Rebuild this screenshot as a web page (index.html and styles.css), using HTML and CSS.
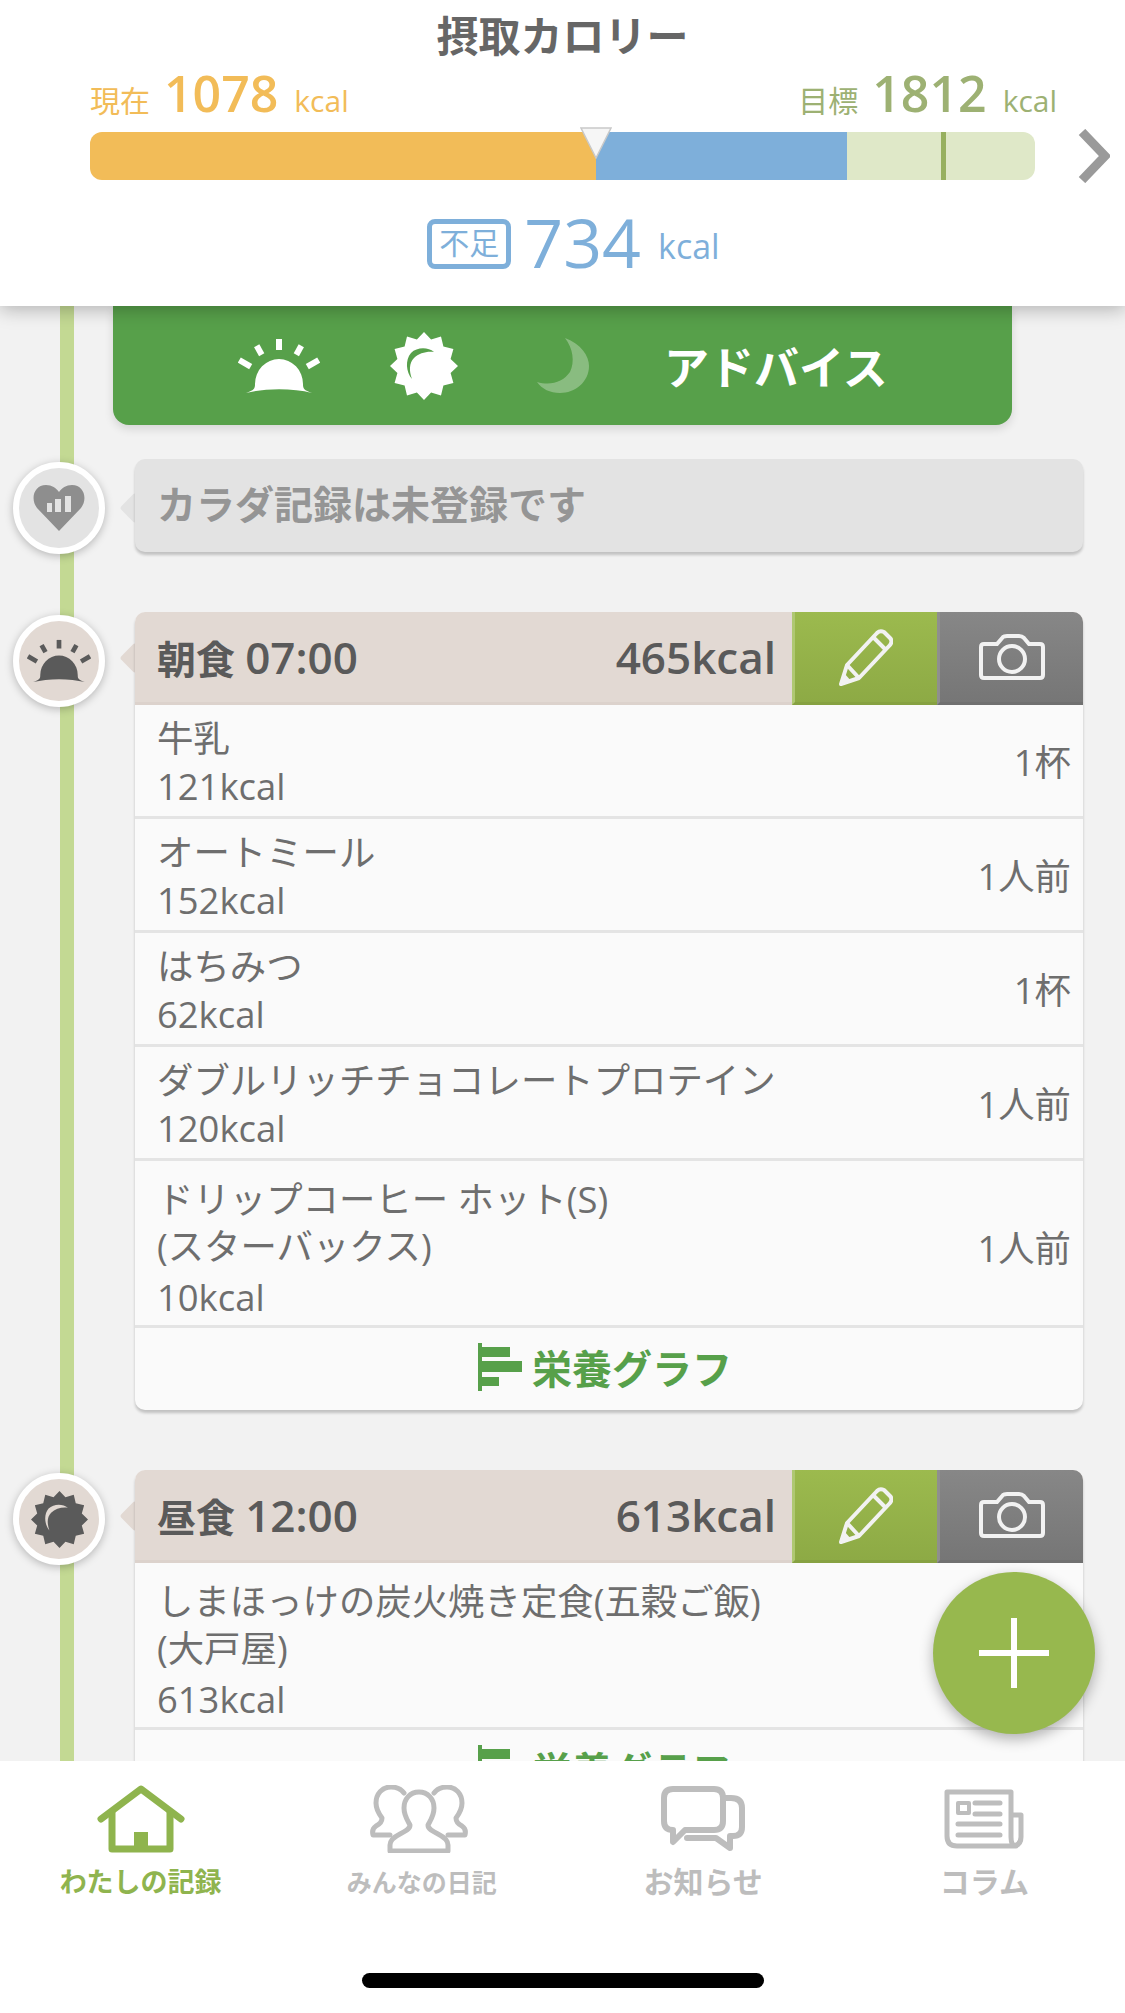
FILE: index.html
```html
<!DOCTYPE html>
<html lang="ja">
<head>
    <meta charset="UTF-8">
    <meta name="viewport" content="width=device-width, initial-scale=1.0">
    <title>わたしの記録</title>
    <link rel="stylesheet" href="styles.css">
</head>
<body>
    <svg class="defs" aria-hidden="true">
        <symbol id="i-sunrise" viewBox="0 0 82 56">
            <path d="M8 55 C16 52 17 51 17 46 A24 25 0 0 1 65 46 C65 51 66 52 74 55 C55 50 27 50 8 55Z" fill="currentColor"/>
            <g stroke="currentColor" stroke-width="6">
                <line x1="41" y1="1" x2="41" y2="12"/>
                <line x1="18.7" y1="7.7" x2="23.7" y2="16.7"/>
                <line x1="63.3" y1="7.7" x2="58.3" y2="16.7"/>
                <line x1="1.3" y1="22" x2="12.7" y2="28.7"/>
                <line x1="80.7" y1="22" x2="69.3" y2="28.7"/>
            </g>
        </symbol>
        <symbol id="i-noon" viewBox="0 0 68 68">
            <polygon fill="currentColor" points="34,0 41.1,7.4 51,4.6 53.4,14.6 63.4,17 60.6,26.9 68,34 60.6,41.1 63.4,51 53.4,53.4 51,63.4 41.1,60.6 34,68 26.9,60.6 17,63.4 14.6,53.4 4.6,51 7.4,41.1 0,34 7.4,26.9 4.6,17 14.6,14.6 17,4.6 26.9,7.4"/>
            <path d="M44 20 C38 15 27 15 21 21 C15 28 16 40 22 47 C19 39 19 31 24 26 C29 21 37 19 44 20Z" style="fill: var(--cut)"/>
        </symbol>
        <symbol id="i-pencil" viewBox="0 0 54 57">
            <g fill="none" stroke="currentColor" stroke-width="4" stroke-linejoin="round">
                <path d="M2 55 L8 36 L38 4 Q41 1 45 3 L51 9 Q54 12 51 16 L20 49Z"/>
                <path d="M34 8 L47 21 M8 36 L20 49"/>
            </g>
            <path d="M2 55 L5 44 L13 53Z" fill="currentColor"/>
        </symbol>
        <symbol id="i-camera" viewBox="0 0 66 46">
            <path d="M5 10 H18 L24 3 Q25 2 28 2 H40 Q43 2 45 4 L50 10 H61 Q64 10 64 13 V41 Q64 44 61 44 H5 Q2 44 2 41 V13 Q2 10 5 10Z" fill="none" stroke="currentColor" stroke-width="4"/>
            <circle cx="33" cy="25" r="13" fill="none" stroke="currentColor" stroke-width="4"/>
        </symbol>
        <symbol id="i-graph" viewBox="0 0 44 48">
            <path d="M0 0 H4 V4 H32 V14 H4 V18 H44 V29 H4 V34 H21 V43 H4 V48 H0Z" fill="currentColor"/>
        </symbol>
    </svg>

    <div class="page">
        <header class="summary">
            <h1 class="summary-title">摂取カロリー</h1>
            <div class="summary-values">
                <div class="value value-now">
                    <span class="value-label">現在</span>
                    <span class="value-num">1078</span>
                    <span class="value-unit">kcal</span>
                </div>
                <div class="value value-goal">
                    <span class="value-label">目標</span>
                    <span class="value-num">1812</span>
                    <span class="value-unit">kcal</span>
                </div>
            </div>
            <div class="gauge-row">
                <div class="gauge">
                    <div class="gauge-track">
                        <div class="gauge-now"></div>
                        <div class="gauge-lack"></div>
                        <div class="gauge-rest"></div>
                    </div>
                    <div class="gauge-goal"></div>
                    <svg class="gauge-pin" viewBox="0 0 32 32" aria-hidden="true">
                        <polygon points="1,1 31,1 16,31" fill="#f6f6f6" stroke="#c9c9c9" stroke-width="1.5"/>
                    </svg>
                </div>
                <svg class="gauge-next" viewBox="0 0 32 54" aria-hidden="true">
                    <polyline points="4,3 27,27 4,51" fill="none" stroke="#9a9a9a" stroke-width="9"/>
                </svg>
            </div>
            <div class="deficit">
                <span class="deficit-tag">不足</span>
                <span class="deficit-num">734</span>
                <span class="deficit-unit">kcal</span>
            </div>
        </header>

        <main class="timeline">
            <div class="timeline-line"></div>

            <section class="advice">
                <svg class="advice-sunrise"><use href="#i-sunrise"/></svg>
                <svg class="advice-noon"><use href="#i-noon"/></svg>
                <svg class="advice-moon" viewBox="0 0 52 56" aria-hidden="true">
                    <path d="M28 0 C44 6 52 18 52 28 C52 44 38 55 23 55 C13 55 5 51 0 44 C14 48 26 44 33 34 C38 24 36 10 28 0Z"/>
                </svg>
                <span class="advice-text">アドバイス</span>
            </section>

            <section class="entry entry-body">
                <div class="dot dot-body">
                    <svg class="dot-heart" viewBox="0 0 52 46" aria-hidden="true">
                        <path d="M26 46 L4 23 C-3 14 1 0 13 0 C19 0 23 3 26 7 C29 3 33 0 39 0 C51 0 55 14 48 23Z" fill="#8e8e8e"/>
                        <path d="M14 18 H19 V27 H14Z M22 14 H28 V27 H22Z M32 11 H38 V27 H32Z" fill="#e3e3e3"/>
                    </svg>
                </div>
                <div class="body-card">カラダ記録は未登録です</div>
            </section>

            <section class="entry">
                <div class="dot">
                    <svg class="dot-sunrise"><use href="#i-sunrise"/></svg>
                </div>
                <div class="meal">
                    <div class="meal-head">
                        <span class="meal-title">朝食 <span class="meal-num">07:00</span></span>
                        <span class="meal-kcal meal-num">465kcal</span>
                        <div class="meal-btn meal-btn-edit"><svg class="icon-pencil"><use href="#i-pencil"/></svg></div>
                        <div class="meal-btn meal-btn-photo"><svg class="icon-camera"><use href="#i-camera"/></svg></div>
                    </div>
                    <div class="item">
                        <div>牛乳<br>121kcal</div>
                        <div>1杯</div>
                    </div>
                    <div class="item">
                        <div>オートミール<br>152kcal</div>
                        <div>1人前</div>
                    </div>
                    <div class="item">
                        <div>はちみつ<br>62kcal</div>
                        <div>1杯</div>
                    </div>
                    <div class="item">
                        <div>ダブルリッチチョコレートプロテイン<br>120kcal</div>
                        <div>1人前</div>
                    </div>
                    <div class="item item-tall">
                        <div>ドリップコーヒー ホット(S)<br>(スターバックス)<span class="item-kcal">10kcal</span></div>
                        <div>1人前</div>
                    </div>
                    <div class="graph-link">
                        <svg class="icon-graph"><use href="#i-graph"/></svg>
                        <span>栄養グラフ</span>
                    </div>
                </div>
            </section>

            <section class="entry">
                <div class="dot">
                    <svg class="dot-noon"><use href="#i-noon"/></svg>
                </div>
                <div class="meal">
                    <div class="meal-head">
                        <span class="meal-title">昼食 <span class="meal-num">12:00</span></span>
                        <span class="meal-kcal meal-num">613kcal</span>
                        <div class="meal-btn meal-btn-edit"><svg class="icon-pencil"><use href="#i-pencil"/></svg></div>
                        <div class="meal-btn meal-btn-photo"><svg class="icon-camera"><use href="#i-camera"/></svg></div>
                    </div>
                    <div class="item item-tall">
                        <div>しまほっけの炭火焼き定食(五穀ご飯)<br>(大戸屋)<span class="item-kcal">613kcal</span></div>
                    </div>
                    <div class="graph-link">
                        <svg class="icon-graph"><use href="#i-graph"/></svg>
                        <span>栄養グラフ</span>
                    </div>
                </div>
            </section>
        </main>

        <div class="fab"></div>

        <nav class="tabbar">
            <div class="tabs">
                <div class="tab tab-active">
                    <svg class="tab-icon tab-icon-home" viewBox="0 0 88 68" aria-hidden="true">
                        <g fill="none" stroke="currentColor" stroke-width="7" stroke-linecap="round" stroke-linejoin="round">
                            <path d="M4 34 L44 4 L84 34"/>
                            <path d="M15 27 V64 H73 V27"/>
                        </g>
                        <rect x="37" y="47" width="14" height="18" fill="currentColor"/>
                    </svg>
                    <span class="tab-label tab-label-active">わたしの記録</span>
                </div>
                <div class="tab">
                    <svg class="tab-icon tab-icon-people" viewBox="0 0 98 68" aria-hidden="true">
                        <g fill="none" stroke="currentColor" stroke-width="5" stroke-linejoin="round" stroke-linecap="round">
                            <path d="M49 7 C58 7 64 14 64 23 C64 31 60 36 58 40 C58 44 62 46 68 49 C74 52 78 56 78 60 V66 H20 V60 C20 56 24 52 30 49 C36 46 40 44 40 40 C38 36 34 31 34 23 C34 14 40 7 49 7Z"/>
                            <path d="M34 8 C31 4 26 2 21 2 C12 2 6 9 6 18 C6 25 9 29 12 33 C12 37 10 39 6 41 C3 43 2 46 3 50 H20"/>
                            <path d="M64 8 C67 4 72 2 77 2 C86 2 92 9 92 18 C92 25 89 29 86 33 C86 37 88 39 92 41 C95 43 96 46 95 50 H78"/>
                        </g>
                    </svg>
                    <span class="tab-label tab-label-narrow">みんなの日記</span>
                </div>
                <div class="tab">
                    <svg class="tab-icon tab-icon-chat" viewBox="0 0 84 66" aria-hidden="true">
                        <g fill="none" stroke="currentColor" stroke-width="6" stroke-linejoin="round" stroke-linecap="round">
                            <path d="M12 3 H53 Q62 3 62 12 V35 Q62 44 53 44 H24 L12 56 V44 Q3 44 3 35 V12 Q3 3 12 3Z"/>
                            <path d="M62 12 H70 Q81 12 81 22 V41 Q81 50 72 50 H69 V62 L55 52 H26"/>
                        </g>
                    </svg>
                    <span class="tab-label">お知らせ</span>
                </div>
                <div class="tab">
                    <svg class="tab-icon tab-icon-news" viewBox="0 0 80 60" aria-hidden="true">
                        <g fill="none" stroke="currentColor" stroke-linejoin="round">
                            <path stroke-width="5" d="M3 3 H67 V48 Q67 57 72 57 H13 Q3 57 3 47Z M67 26 H77 V48 Q77 57 68 57"/>
                            <rect x="14" y="14" width="11" height="10" stroke-width="4"/>
                            <path stroke-width="5" stroke-linecap="round" d="M31 14 H56 M31 25 H56 M14 35 H56 M14 46 H56"/>
                        </g>
                    </svg>
                    <span class="tab-label">コラム</span>
                </div>
            </div>
            <div class="home-bar"></div>
        </nav>
    </div>
</body>
</html>
```

FILE: styles.css
```css
:root {
    --orange: #f2bc58;
    --blue: #7eafda;
    --green: #57a04a;
    --leaf: #97b84e;
    --olive: #9db173;
    --beige: #e2d9d3;
    --text: #6e6e6e;
    --text-dark: #5a5a5a;
    --tab-gray: #bdbdbd;
}

* {
    box-sizing: border-box;
    margin: 0;
    padding: 0;
}

body {
    font-family: "Open Sans", "Noto Sans CJK JP", sans-serif;
    color: var(--text);
    background: #fff;
}

.defs {
    display: none;
}

.page {
    position: relative;
    width: 1125px;
    height: 2013px;
    display: flex;
    flex-direction: column;
    overflow: hidden;
}

/* Header */
.summary {
    position: relative;
    z-index: 3;
    height: 306px;
    flex-shrink: 0;
    background: #fff;
    box-shadow: 0 3px 18px rgba(0, 0, 0, 0.28);
}

.summary-title {
    padding-top: 8px;
    font-size: 42px;
    line-height: 56px;
    font-weight: 700;
    text-align: center;
    color: #666;
}

.summary-values {
    display: flex;
    justify-content: space-between;
    height: 65px;
    padding: 0 68px 0 90px;
}

.value {
    display: flex;
    align-items: baseline;
    line-height: 58px;
}

.value-now {
    color: var(--orange);
}

.value-goal {
    color: var(--olive);
}

.value-label {
    font-size: 30px;
}

.value-num {
    margin: 0 16px 0 14px;
    font-size: 50px;
    font-weight: 600;
}

.value-unit {
    font-size: 30px;
}

.gauge-row {
    display: flex;
    align-items: center;
    gap: 43px;
    padding-left: 90px;
}

.gauge {
    position: relative;
    width: 945px;
    height: 48px;
}

.gauge-track {
    display: flex;
    height: 100%;
    border-radius: 12px;
    overflow: hidden;
}

.gauge-now {
    width: 506px;
    background: var(--orange);
}

.gauge-lack {
    width: 251px;
    background: var(--blue);
}

.gauge-rest {
    flex: 1;
    background: #dfe8c8;
}

.gauge-goal {
    position: absolute;
    top: 0;
    left: 851px;
    width: 5px;
    height: 100%;
    background: #97b05f;
}

.gauge-pin {
    position: absolute;
    top: -5px;
    left: 490px;
    width: 32px;
    height: 32px;
}

.gauge-next {
    width: 32px;
    height: 54px;
}

.deficit {
    display: flex;
    align-items: center;
    justify-content: center;
    gap: 13px;
    margin-top: 32px;
    padding-left: 22px;
    color: var(--blue);
}

.deficit-tag {
    width: 84px;
    height: 50px;
    border: 5px solid var(--blue);
    border-radius: 8px;
    font-size: 30px;
    line-height: 38px;
    text-align: center;
}

.deficit-num {
    margin-bottom: 4px;
    font-size: 68px;
    line-height: 54px;
}

.deficit-unit {
    margin-top: 4px;
    margin-left: 4px;
    font-size: 34px;
    line-height: 40px;
}

/* Timeline */
.timeline {
    position: relative;
    flex: 1;
    min-height: 0;
    overflow: hidden;
    background: #f2f2f2;
}

.timeline-line {
    position: absolute;
    top: 0;
    bottom: 0;
    left: 60px;
    width: 14px;
    background: #c3d993;
}

.advice {
    position: relative;
    display: flex;
    align-items: center;
    width: 899px;
    height: 119px;
    margin: 0 0 34px 113px;
    padding-left: 125px;
    border-radius: 0 0 16px 16px;
    background: var(--green);
    box-shadow: 0 4px 10px rgba(0, 0, 0, 0.12);
    color: #fff;
    --cut: var(--green);
}

.advice-sunrise {
    width: 82px;
    height: 56px;
}

.advice-noon {
    width: 68px;
    height: 68px;
    margin-left: 70px;
}

.advice-moon {
    width: 52px;
    height: 56px;
    margin-left: 79px;
    fill: rgba(255, 255, 255, 0.3);
}

.advice-text {
    margin-left: 75px;
    font-size: 45px;
    font-weight: 700;
}

.entry {
    position: relative;
    width: 948px;
    margin: 0 0 60px 135px;
}

.entry::before {
    content: "";
    position: absolute;
    top: 35px;
    left: -11px;
    width: 22px;
    height: 22px;
    border-radius: 3px;
    background: var(--beige);
    transform: rotate(45deg);
}

.entry-body::before {
    top: 38px;
    background: #e3e3e3;
}

.dot {
    position: absolute;
    top: 3px;
    left: -122px;
    z-index: 1;
    display: flex;
    align-items: center;
    justify-content: center;
    width: 92px;
    height: 92px;
    border: 6px solid #fff;
    border-radius: 50%;
    background: var(--beige);
    box-shadow: 0 2px 8px rgba(0, 0, 0, 0.25);
    color: var(--text-dark);
    --cut: var(--beige);
}

.dot-body {
    background: #e3e3e3;
}

.dot-heart {
    width: 52px;
    height: 46px;
}

.dot-sunrise {
    width: 64px;
    height: 44px;
}

.dot-noon {
    width: 57px;
    height: 57px;
}

.body-card {
    position: relative;
    height: 93px;
    padding-left: 22px;
    border-radius: 10px;
    background: #e3e3e3;
    box-shadow: 0 3px 3px rgba(0, 0, 0, 0.2);
    font-size: 39px;
    font-weight: 700;
    line-height: 90px;
    color: #959595;
}

.meal {
    position: relative;
    border-radius: 10px;
    background: #fafafa;
    box-shadow: 0 3px 3px rgba(0, 0, 0, 0.2);
}

.meal-head {
    display: flex;
    align-items: center;
    height: 93px;
    padding-left: 22px;
    border-radius: 10px 10px 0 0;
    background: var(--beige);
    box-shadow: inset 0 -3px 0 #dcd2cc;
    color: var(--text-dark);
    font-size: 39px;
    font-weight: 700;
}

.meal-title {
    flex: 1;
    margin-bottom: 4px;
}

.meal-num {
    font-size: 44px;
    font-weight: 600;
}

.meal-kcal {
    margin: 0 16px 4px 0;
}

.meal-btn {
    display: flex;
    align-items: center;
    justify-content: center;
    height: 93px;
    color: #f2f2f2;
}

.meal-btn-edit {
    width: 145px;
    border-left: 3px solid #afc872;
    border-bottom: 3px solid #86a141;
    background: linear-gradient(#9cba4e, #8daa45);
}

.meal-btn-photo {
    width: 146px;
    border-left: 3px solid #8f8f8f;
    border-bottom: 3px solid #707070;
    border-radius: 0 10px 0 0;
    background: linear-gradient(#878787, #767676);
}

.icon-pencil {
    width: 54px;
    height: 57px;
}

.icon-camera {
    width: 66px;
    height: 46px;
}

.item {
    display: flex;
    align-items: center;
    justify-content: space-between;
    padding: 9px 12px 6px 22px;
    border-bottom: 3px solid #e4e4e4;
    font-size: 36.4px;
    line-height: 48px;
}

.item-tall {
    padding: 15px 12px 4px 22px;
    line-height: 47px;
}

.item-kcal {
    display: block;
    margin-top: 4px;
}

.graph-link {
    display: flex;
    align-items: center;
    justify-content: center;
    gap: 10px;
    height: 82px;
    padding: 0 8px 4px 0;
    color: var(--green);
    font-size: 40px;
    font-weight: 700;
}

.icon-graph {
    width: 44px;
    height: 48px;
}

.fab {
    position: absolute;
    top: 1572px;
    left: 933px;
    z-index: 2;
    width: 162px;
    height: 162px;
    border-radius: 50%;
    background: var(--leaf);
    box-shadow: 0 5px 14px rgba(0, 0, 0, 0.3);
}

.fab::before,
.fab::after {
    content: "";
    position: absolute;
    top: 50%;
    left: 50%;
    background: #fff;
    transform: translate(-50%, -50%);
}

.fab::before {
    width: 70px;
    height: 6px;
}

.fab::after {
    width: 6px;
    height: 70px;
}

/* Tab bar */
.tabbar {
    position: relative;
    z-index: 3;
    height: 252px;
    flex-shrink: 0;
    padding-top: 24px;
    background: #fff;
}

.tabs {
    display: grid;
    grid-template-columns: repeat(4, 1fr);
}

.tab {
    display: flex;
    flex-direction: column;
    align-items: center;
    color: var(--tab-gray);
}

.tab-active {
    color: #8fb44e;
}

.tab-icon {
    height: 68px;
}

.tab-icon-home {
    width: 88px;
}

.tab-icon-people {
    width: 98px;
    margin-left: -5px;
}

.tab-icon-chat {
    width: 84px;
}

.tab-icon-news {
    width: 80px;
}

.tab-label {
    margin-top: 14px;
    font-size: 30px;
    font-weight: 700;
    line-height: 30px;
}

.tab-label-active {
    font-size: 27px;
}

.tab-label-narrow {
    font-size: 25px;
}

.home-bar {
    width: 402px;
    height: 15px;
    margin: 76px auto 0;
    border-radius: 8px;
    background: #000;
}
```
